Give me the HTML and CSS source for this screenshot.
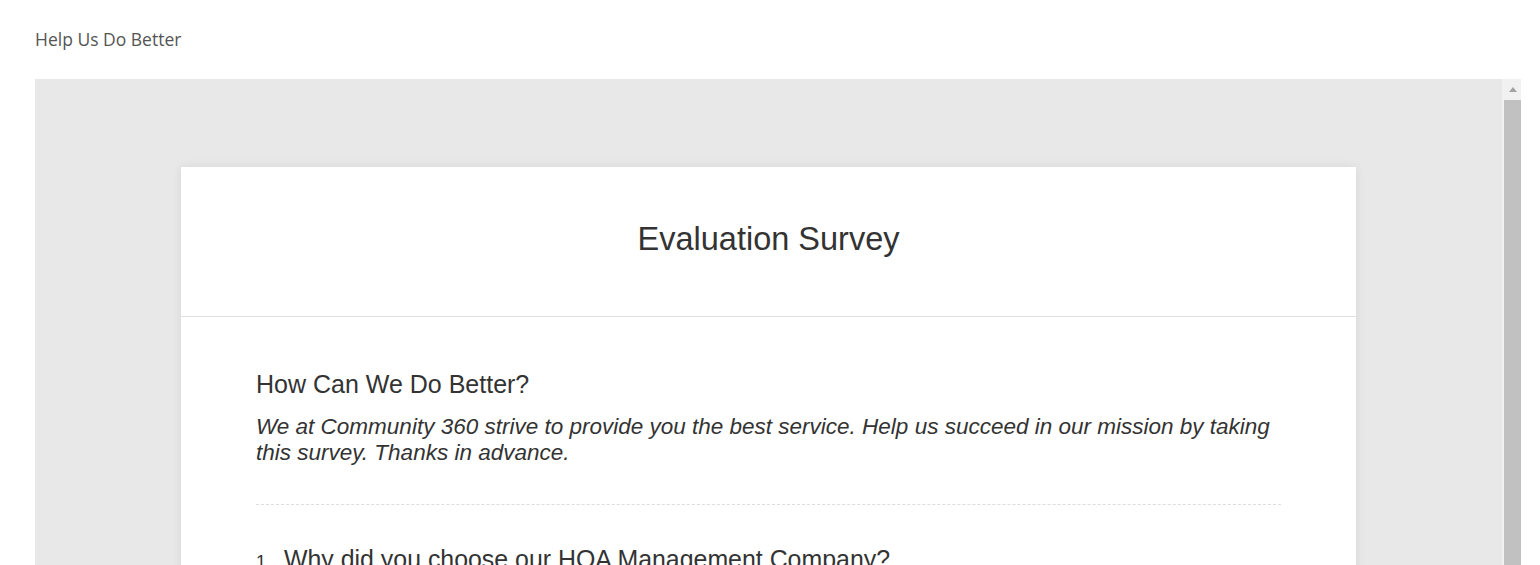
FILE: index.html
```html
<!DOCTYPE html>
<html lang="en">
<head>
<meta charset="utf-8">
<title>Help Us Do Better</title>
<link rel="stylesheet" href="styles.css">
</head>
<body>
<div class="page">
  <div class="topbar">Help Us Do Better</div>
  <div class="frame">
    <div class="viewport">
      <div class="card">
        <div class="card-header">
          <h1 class="title">Evaluation Survey</h1>
        </div>
        <div class="card-body">
          <h2 class="section-title">How Can We Do Better?</h2>
          <p class="intro">We at Community 360 strive to provide you the best service. Help us succeed in our mission by taking this survey. Thanks in advance.</p>
          <div class="divider"></div>
          <div class="question">
            <span class="num">1.</span>
            <span class="qtext">Why did you choose our HOA Management Company?</span>
          </div>
        </div>
      </div>
    </div>
    <div class="scrollbar">
      <div class="scroll-btn"><span class="arrow-up"></span></div>
      <div class="thumb"></div>
    </div>
  </div>
</div>
</body>
</html>
```
FILE: styles.css
```css
html, body {
  margin: 0;
  padding: 0;
  background: #ffffff;
  overflow: hidden;
}

.page {
  padding: 0 19px 0 35px;
}

.topbar {
  height: 78px;
  display: flex;
  align-items: center;
  font-family: "Open Sans", "Liberation Sans", sans-serif;
  font-size: 17.5px;
  color: #555555;
  margin-bottom: 1px;
}

.frame {
  display: flex;
  height: 600px;
}

.viewport {
  flex: 1;
  background: #e8e8e8;
  padding-top: 88px;
}

.card {
  width: 1175px;
  margin: 0 auto;
  background: #ffffff;
  box-shadow: 0 0 10px rgba(0, 0, 0, 0.08);
  font-family: "Liberation Sans", Arial, sans-serif;
  color: #333333;
  height: 700px;
}

.card-header {
  padding: 54px 0 58px;
  border-bottom: 1px solid #e0e0e0;
  text-align: center;
}

.title {
  margin: 0;
  font-size: 32.5px;
  line-height: 37px;
  font-weight: normal;
}

.card-body {
  padding: 53px 75px 0;
}

.section-title {
  margin: 0;
  font-size: 25px;
  line-height: 29.4px;
  font-weight: normal;
}

.intro {
  margin: 14.5px 0 0;
  font-size: 22.5px;
  line-height: 26px;
  font-style: italic;
}

.divider {
  margin-top: 38px;
  border-top: 1px dashed #dddddd;
}

.question {
  margin-top: 40px;
  display: flex;
  align-items: baseline;
  line-height: 28.8px;
}

.num {
  font-size: 18px;
  margin-left: 0;
  margin-right: 13px;
}

.qtext {
  font-size: 24.9px;
}

.scrollbar {
  width: 19px;
  background: #f1f1f1;
  display: flex;
  flex-direction: column;
  align-items: flex-end;
}

.scroll-btn {
  height: 21px;
  width: 17px;
  display: flex;
  justify-content: center;
  align-items: center;
}

.arrow-up {
  width: 0;
  height: 0;
  border-left: 4.5px solid transparent;
  border-right: 4.5px solid transparent;
  border-bottom: 5px solid #a3a3a3;
}

.thumb {
  width: 17px;
  flex: 1;
  background: #c1c1c1;
}
```
